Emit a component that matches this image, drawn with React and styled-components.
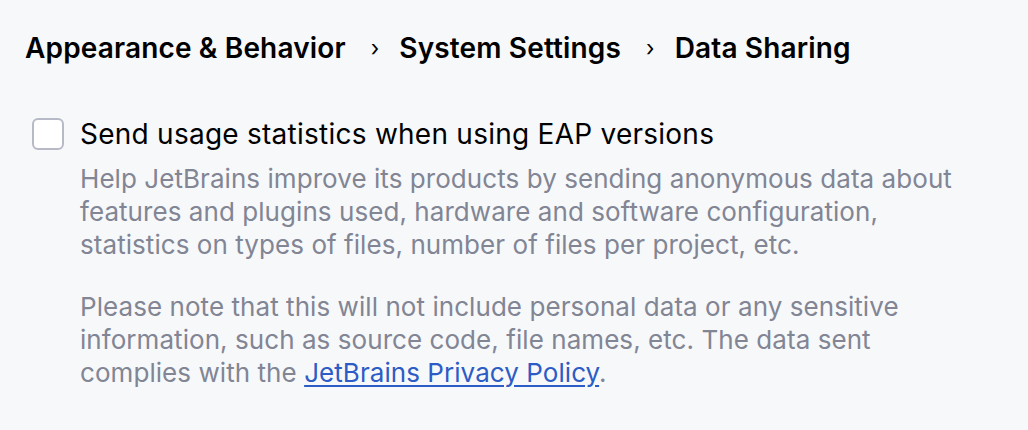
import React from 'react'
import styled, { createGlobalStyle } from 'styled-components'

const Global = createGlobalStyle`
  html, body {
    margin: 0;
    padding: 0;
    background: #f7f8fa;
  }
  body {
    font-family: Inter, "Noto Sans", sans-serif;
    -webkit-font-smoothing: antialiased;
  }
`

const Page = styled.div`
  width: 1028px;
  height: 430px;
  box-sizing: border-box;
  padding: 30px 25px 0 25px;
  background: #f7f8fa;
`

const Breadcrumbs = styled.div`
  display: flex;
  align-items: center;
  font-size: 28px;
  font-weight: 600;
  letter-spacing: 0.15px;
  color: #000000;
  line-height: 36px;
`

const Crumb = styled.span``

const Sep = styled.span`
  font-weight: 400;
  font-size: 22px;
  margin: 0 20px 0 25px;
  color: #000;
`

const Option = styled.div`
  display: flex;
  align-items: flex-start;
  gap: 16px;
  margin-top: 50px;
  margin-left: 7px;
`

const Box = styled.span`
  width: 28px;
  height: 28px;
  flex: none;
  margin-top: 2px;
  border: 2px solid #b7bac6;
  border-radius: 6px;
  background: #ffffff;
`

const Body = styled.div`
  display: flex;
  flex-direction: column;
`

const Label = styled.div`
  font-size: 28px;
  line-height: 36px;
  letter-spacing: 0.25px;
  color: #000000;
`

const Note = styled.p`
  margin: ${p => (p.$first ? '9.5px' : '29px')} 0 0 0;
  font-size: 26px;
  line-height: 33px;
  letter-spacing: 0.06px;
  color: #818594;
`

const Link = styled.a`
  color: #2c5cc5;
  text-decoration: underline;
  text-underline-offset: 3px;
`

export default function App() {
  return (
    <Page>
      <Global />
      <Breadcrumbs>
        <Crumb>Appearance &amp; Behavior</Crumb>
        <Sep>›</Sep>
        <Crumb>System Settings</Crumb>
        <Sep>›</Sep>
        <Crumb>Data Sharing</Crumb>
      </Breadcrumbs>
      <Option>
        <Box />
        <Body>
          <Label>Send usage statistics when using EAP versions</Label>
          <Note $first>
            Help JetBrains improve its products by sending anonymous data about<br />
            features and plugins used, hardware and software configuration,<br />
            statistics on types of files, number of files per project, etc.
          </Note>
          <Note>
            Please note that this will not include personal data or any sensitive<br />
            information, such as source code, file names, etc. The data sent<br />
            complies with the <Link href="#">JetBrains Privacy Policy</Link>.
          </Note>
        </Body>
      </Option>
    </Page>
  )
}
